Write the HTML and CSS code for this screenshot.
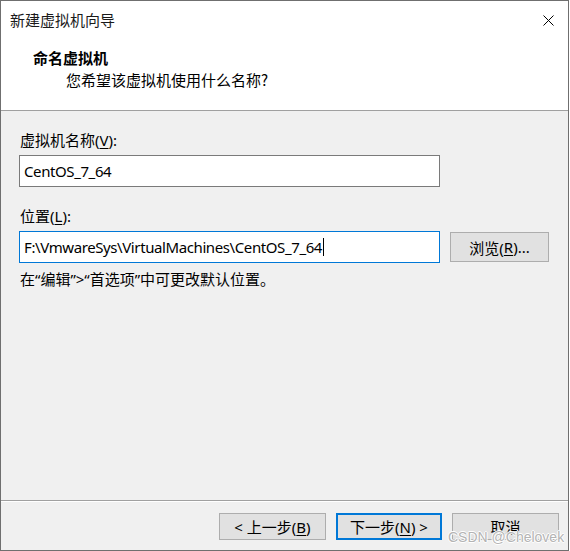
FILE: index.html
```html
<!DOCTYPE html>
<html lang="zh-CN">
<head>
<meta charset="utf-8">
<title>新建虚拟机向导</title>
<link rel="stylesheet" href="styles.css">
</head>
<body>
<div class="window">
  <div class="titlebar">
    <span class="title">新建虚拟机向导</span>
    <span class="close" aria-label="关闭">
      <svg width="11" height="11" viewBox="0 0 11 11"><path d="M0.5 0.5 L10.5 10.5 M10.5 0.5 L0.5 10.5" stroke="#000" stroke-width="1" fill="none"/></svg>
    </span>
  </div>
  <div class="header">
    <div class="h-title">命名虚拟机</div>
    <div class="h-sub">您希望该虚拟机使用什么名称?</div>
  </div>
  <div class="body">
    <div class="label first">虚拟机名称(<u>V</u>):</div>
    <div class="row">
      <div class="input">CentOS_7_64</div>
    </div>
    <div class="label">位置(<u>L</u>):</div>
    <div class="row">
      <div class="input focused">F:\VmwareSys\VirtualMachines\CentOS_7_64<span class="caret"></span></div>
      <div class="btn browse">浏览(<u>R</u>)...</div>
    </div>
    <div class="hint">在“编辑”&gt;“首选项”中可更改默认位置。</div>
  </div>
  <div class="footer">
    <div class="btn nav">&lt; 上一步(<u>B</u>)</div>
    <div class="btn nav default">下一步(<u>N</u>) &gt;</div>
    <div class="btn nav">取消</div>
  </div>
  <div class="watermark">CSDN @Chelovek</div>
</div>
</body>
</html>
```

FILE: styles.css
```css
* { box-sizing: border-box; }
html, body { margin: 0; padding: 0; background: #ffffff; }
body {
  width: 570px;
  height: 551px;
  font-family: "Segoe UI", "Noto Sans", "Noto Sans CJK SC", sans-serif;
  font-size: 15px;
  color: #000;
}
.window {
  position: relative;
  width: 569px;
  height: 551px;
  border: 1px solid #6f6f6f;
  background: #f0f0f0;
  display: flex;
  flex-direction: column;
}
.titlebar {
  height: 38px;
  background: #fff;
  display: flex;
  align-items: center;
  justify-content: space-between;
  padding: 0 14px 0 9px;
}
.title {
  font-family: "Noto Sans CJK SC", sans-serif;
  font-size: 15px;
  line-height: 20px;
  color: #1a1a1a;
}
.close { display: flex; width: 11px; height: 11px; }
.header {
  height: 72px;
  background: #fff;
  border-bottom: 1px solid #a0a0a0;
  padding-top: 8px;
}
.h-title {
  font-family: "Noto Sans CJK SC", sans-serif;
  font-weight: bold;
  font-size: 15px;
  line-height: 22px;
  padding-left: 32px;
}
.h-sub {
  font-family: "Noto Sans CJK SC", sans-serif;
  font-size: 15px;
  line-height: 22px;
  padding-left: 65px;
}
.body {
  flex: 1;
  padding: 0 0 0 18px;
  display: flex;
  flex-direction: column;
  border-bottom: 1px solid #a0a0a0;
  box-shadow: 0 1px 0 #ffffff;
}
.label {
  line-height: 20px;
  height: 20px;
  margin-top: 19px;
  margin-bottom: 5px;
  padding-left: 1px;
}
.row {
  display: flex;
  align-items: center;
  gap: 10px;
}
.input {
  width: 421px;
  height: 32px;
  background: #fff;
  border: 1px solid #7a7a7a;
  padding: 0 4px;
  line-height: 30px;
  white-space: nowrap;
  font-size: 15px;
  letter-spacing: -0.4px;
  display: flex;
  align-items: center;
}
.input.focused { border-color: #0078d7; }
.caret {
  display: inline-block;
  width: 1px;
  height: 18px;
  background: #000;
  margin-left: 1px;
}
.btn {
  background: #e1e1e1;
  border: 1px solid #adadad;
  display: flex;
  align-items: center;
  justify-content: center;
  white-space: nowrap;
  font-size: 15px;
}
.browse { width: 99px; height: 30px; }
.hint {
  margin-top: 6px;
  line-height: 20px;
  padding-left: 1px;
}
.footer {
  height: 48px;
  margin-top: 1px;
  display: flex;
  justify-content: flex-end;
  gap: 10px;
  padding: 11px 9px 0 0;
}
.nav { width: 107px; height: 27px; }
.nav.default { width: 106px; border: 2px solid #0078d7; }
u { text-decoration: underline; text-underline-offset: 2px; }
.watermark {
  position: absolute;
  left: 447px;
  top: 528px;
  font-family: "Liberation Sans", Arial, sans-serif;
  font-size: 14px;
  line-height: 16px;
  color: #b4b4b4;
  text-shadow: 1px 0 0 #fff, -1px 0 0 #fff, 0 1px 0 #fff, 0 -1px 0 #fff;
  pointer-events: none;
}
```
